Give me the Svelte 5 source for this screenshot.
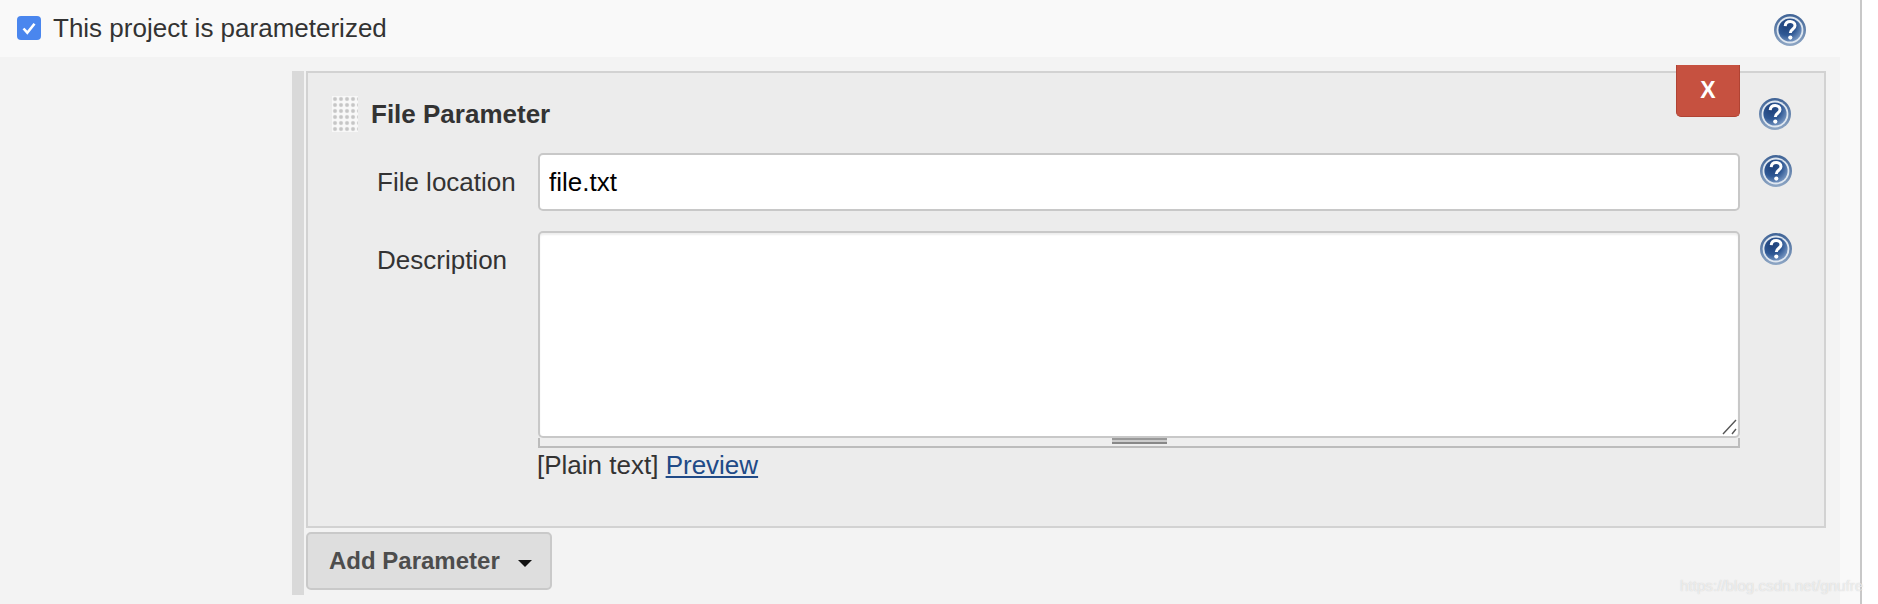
<script>
	let location = $state('file.txt');
	let description = $state('');
</script>

{#snippet help()}
	<svg class="help" viewBox="0 0 32 32" aria-label="Help">
		<defs>
			<radialGradient id="help-fill" cx="0.35" cy="0.3" r="0.85">
				<stop offset="0" stop-color="#1d3f78" />
				<stop offset="0.5" stop-color="#2f5894" />
				<stop offset="1" stop-color="#8fabd0" />
			</radialGradient>
			<linearGradient id="help-edge" x1="0" y1="0" x2="0" y2="1">
				<stop offset="0" stop-color="#3f6396" />
				<stop offset="1" stop-color="#8ea6c4" />
			</linearGradient>
		</defs>
		<circle cx="16" cy="16" r="16" fill="url(#help-edge)" />
		<circle cx="16" cy="16" r="13.4" fill="#dfe7f0" />
		<circle cx="16" cy="16" r="11.6" fill="url(#help-fill)" />
		<path d="M11.2 12.2c.3-3 2.5-4.6 5-4.6 2.8 0 4.8 1.7 4.8 4.1 0 3.5-4.7 3.6-4.7 7.2" fill="none" stroke="#fff" stroke-width="3" />
		<circle cx="16.3" cy="23.6" r="2.1" fill="#fff" />
	</svg>
{/snippet}

<div class="page">
	<header class="top">
		<label class="check">
			<span class="box">
				<svg viewBox="0 0 24 24" width="24" height="24">
					<path d="M6.5 12.5l3.8 4.2 7.2-9" fill="none" stroke="#fff" stroke-width="2.6" />
				</svg>
			</span>
			This project is parameterized
		</label>
		{@render help()}
	</header>

	<main class="body">
		<div class="bar"></div>
		<div class="content">
			<section class="panel">
				<button class="delete">X</button>
				<div class="title">
					<span class="handle"></span>
					<b>File Parameter</b>
					{@render help()}
				</div>
				<div class="row">
					<span class="label">File location</span>
					<input type="text" bind:value={location} />
					{@render help()}
				</div>
				<div class="row">
					<span class="label">Description</span>
					<div class="field">
						<textarea bind:value={description}></textarea>
						<svg class="resizer" viewBox="0 0 16 16" width="16" height="16">
							<path d="M1 15L14 1M10 15l4-5" fill="none" stroke="#555" stroke-width="1.4" />
						</svg>
						<div class="grip"><span></span></div>
						<div class="format">[Plain text] <a href="#preview">Preview</a></div>
					</div>
					{@render help()}
				</div>
			</section>
			<button class="add">Add Parameter <i></i></button>
		</div>
	</main>
	<span class="mark">https://blog.csdn.net/gnufre</span>
</div>

<style>
	:global(body) {
		background: #fff;
	}

	.page {
		position: relative;
		width: 1860px;
		height: 604px;
		border-right: 2px solid #c8c8c8;
		background: #f9f9f9;
		font-family: 'Liberation Sans', Arial, sans-serif;
		font-size: 26px;
		color: #333;
	}

	.top {
		display: flex;
		align-items: center;
		justify-content: space-between;
		height: 57px;
		padding: 0 54px 0 17px;
		box-sizing: border-box;
	}

	.top .help {
		margin-top: 3px;
	}

	.check {
		display: flex;
		align-items: center;
		gap: 12px;
		margin-top: -1px;
	}

	.box {
		display: block;
		width: 24px;
		height: 24px;
		border-radius: 4px;
		background: #4a86ee;
	}

	.box svg {
		display: block;
	}

	.help {
		display: block;
		flex: none;
		width: 32px;
		height: 32px;
	}

	.body {
		display: flex;
		width: 1840px;
		height: 547px;
		padding: 14px 0 0 292px;
		box-sizing: border-box;
		background: #f3f3f3;
	}

	.bar {
		flex: none;
		width: 12px;
		height: 524px;
		margin-right: 2px;
		background: #d9d9d9;
	}

	.content {
		width: 1520px;
	}

	.panel {
		position: relative;
		height: 457px;
		box-sizing: border-box;
		border: 2px solid #d2d2d2;
		background: #ececec;
	}

	.delete {
		position: absolute;
		top: -8px;
		left: 1368px;
		width: 64px;
		height: 52px;
		padding: 0;
		border: 1px solid #b04333;
		border-top: 0;
		border-radius: 0 0 5px 5px;
		background: #c65140;
		color: #fff;
		font: bold 23px 'Liberation Sans', Arial, sans-serif;
	}

	.title {
		display: flex;
		align-items: center;
		height: 80px;
		padding: 2px 0 0 24px;
		box-sizing: border-box;
	}

	.title b {
		flex: 1;
		margin-left: 13px;
	}

	.title .help {
		margin-right: 33px;
	}

	.handle {
		width: 26px;
		height: 36px;
		background-color: #f8f8f8;
		background-image: radial-gradient(circle at 3px 3px, #bdbdbd 0, #d0d0d0 1.5px, transparent 2.6px);
		background-size: 6px 6px;
	}

	.row {
		display: grid;
		grid-template-columns: 161px 1202px 32px;
		padding-left: 69px;
		margin-bottom: 20px;
	}

	.row .help {
		margin: 2px 0 0 20px;
	}

	.label {
		line-height: 58px;
	}

	.field {
		position: relative;
	}

	input,
	textarea {
		display: block;
		width: 100%;
		box-sizing: border-box;
		border: 2px solid #c8c8c8;
		border-radius: 5px;
		background: #fff;
		color: #000;
		font: 26px 'Liberation Sans', Arial, sans-serif;
		outline: none;
	}

	input {
		height: 58px;
		padding: 0 9px;
	}

	textarea {
		height: 207px;
		padding: 9px;
		resize: none;
		box-shadow: inset 0 2px 2px #eee;
	}

	.resizer {
		position: absolute;
		top: 188px;
		right: 2px;
	}

	.grip {
		display: flex;
		justify-content: center;
		height: 10px;
		box-sizing: border-box;
		border: 2px solid #bcbcbc;
		border-top: 0;
		background: #eee;
	}

	.grip span {
		width: 55px;
		height: 6px;
		border-top: 2px solid #999;
		border-bottom: 2px solid #888;
		box-sizing: border-box;
		background: #ccc;
	}

	.format {
		margin: 1px 0 0 -1px;
		line-height: 32px;
	}

	a {
		color: #204a87;
	}

	.add {
		display: flex;
		align-items: center;
		width: 246px;
		height: 58px;
		margin-top: 4px;
		padding: 0 0 0 21px;
		box-sizing: border-box;
		border: 2px solid #c9c9c9;
		border-radius: 5px;
		background: #dedede;
		color: #4d4d4d;
		font: bold 24px 'Liberation Sans', Arial, sans-serif;
	}

	.add i {
		margin: 4px 0 0 18px;
		border-top: 7px solid #111;
		border-left: 7px solid transparent;
		border-right: 7px solid transparent;
	}

	.mark {
		position: absolute;
		left: 1680px;
		top: 577px;
		font-size: 15.2px;
		color: rgba(255, 255, 255, 0.6);
		text-shadow: 0 0 1px rgba(170, 170, 170, 0.6);
		white-space: nowrap;
	}
</style>
